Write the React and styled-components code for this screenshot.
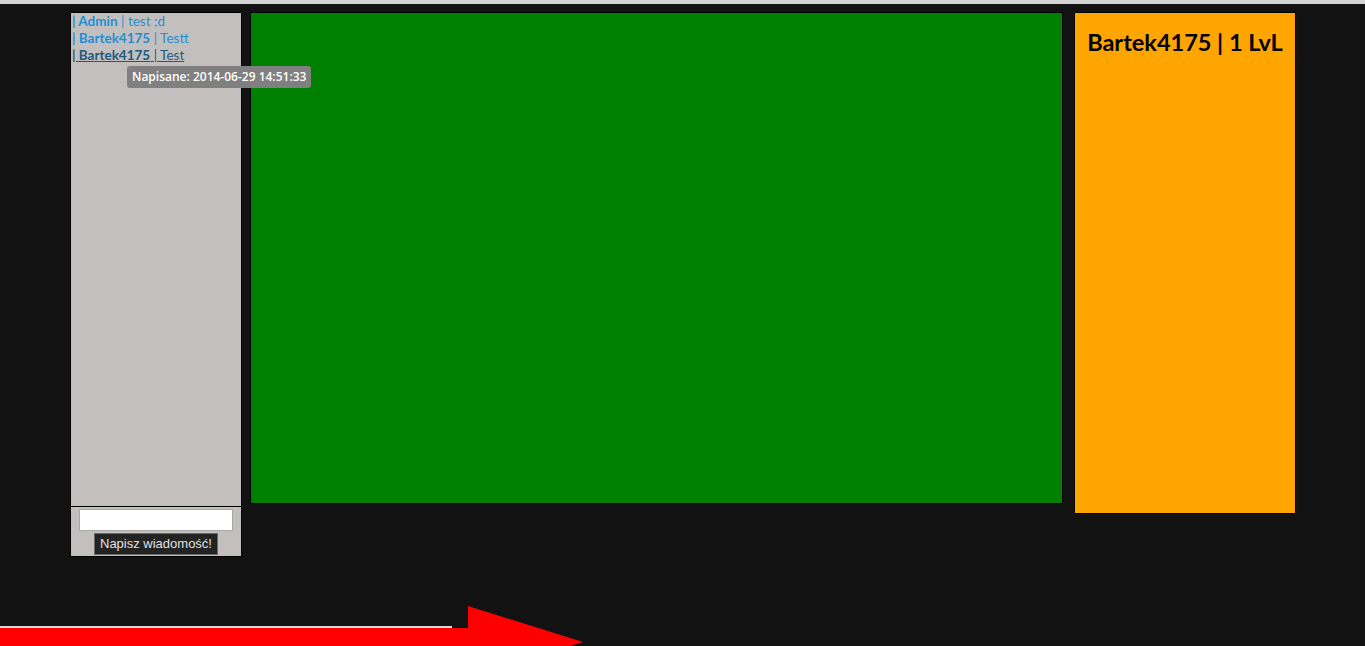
import React from "react";
import styled, { createGlobalStyle } from "styled-components";

const Global = createGlobalStyle`
  html, body {
    margin: 0;
    padding: 0;
    background: #121212;
    height: 100%;
    overflow: hidden;
  }
  #root {
    min-height: 100%;
  }
`;

const messages = [
  { user: "Admin", text: "test ;d" },
  { user: "Bartek4175", text: "Testt" },
  { user: "Bartek4175", text: "Test", hover: true },
];

export default function App() {
  return (
    <>
      <Global />
      <TopStrip />
      <Page>
        <Chat>
          <Messages>
            {messages.map((m, i) => (
              <Message key={i} $hover={m.hover}>
                <b>| {m.user}</b> | {m.text}
                {m.hover && <Tooltip>Napisane: 2014-06-29 14:51:33</Tooltip>}
              </Message>
            ))}
          </Messages>
          <Form>
            <Input type="text" />
            <Button>Napisz wiadomość!</Button>
          </Form>
        </Chat>
        <Game />
        <Profile>
          <h2>Bartek4175 | 1 LvL</h2>
        </Profile>
      </Page>
      <Arrow width="600" height="60" viewBox="0 586 600 60">
        <rect x="0" y="626" width="452" height="2" fill="#d8d8d8" />
        <polygon
          points="0,628 468,628 468,606 583,642 468,678 468,656 0,656"
          fill="#ff0000"
        />
      </Arrow>
    </>
  );
}

const TopStrip = styled.div`
  height: 4px;
  background: #d4d4d4;
`;

const Page = styled.div`
  display: flex;
  align-items: flex-start;
  padding: 8px 0 0 70px;
`;

const Chat = styled.div`
  box-sizing: border-box;
  width: 172px;
  height: 545px;
  border: 1px solid #000;
  background: #c4bfbf;
  display: flex;
  flex-direction: column;
`;

const Messages = styled.div`
  flex: 1;
  border-bottom: 1px solid #000;
`;

const Message = styled.div`
  position: relative;
  display: table;
  font-family: Lato, "Open Sans", sans-serif;
  font-size: 13.5px;
  line-height: 17px;
  padding-left: 1px;
  color: ${(p) => (p.$hover ? "#1c5a7e" : "#1e8fd4")};
  text-decoration: ${(p) => (p.$hover ? "underline" : "none")};
  b {
    font-weight: 700;
  }
`;

const Tooltip = styled.span`
  position: absolute;
  left: 56px;
  top: 19px;
  white-space: nowrap;
  background: #808080;
  color: #fff;
  font-family: "Open Sans", sans-serif;
  font-weight: 600;
  font-size: 12px;
  line-height: 22px;
  padding: 0 5px;
  border-radius: 3px;
  text-decoration: none;
  display: inline-block;
`;

const Form = styled.div`
  height: 49px;
  display: flex;
  flex-direction: column;
  align-items: center;
  justify-content: center;
  gap: 2px;
`;

const Input = styled.input`
  box-sizing: border-box;
  width: 154px;
  height: 22px;
  border: 1px solid #a8a8a8;
  background: #fff;
  margin: 0;
`;

const Button = styled.button`
  box-sizing: border-box;
  height: 22px;
  padding: 0 5px;
  background: #232323;
  color: #e0e0e0;
  border: 1px solid #6a6a6a;
  font-family: "Liberation Sans", Arial, sans-serif;
  font-size: 13px;
`;

const Game = styled.div`
  box-sizing: border-box;
  margin-left: 8px;
  width: 813px;
  height: 492px;
  background: #008000;
  border: 1px solid #000;
`;

const Profile = styled.div`
  box-sizing: border-box;
  margin-left: 11px;
  width: 222px;
  height: 502px;
  background: #ffa500;
  border: 1px solid #000;
  h2 {
    margin: 15px 0 0;
    text-align: center;
    font-family: Lato, "Open Sans", sans-serif;
    font-weight: 700;
    font-size: 23.5px;
    color: #000;
  }
`;

const Arrow = styled.svg`
  position: absolute;
  left: 0;
  top: 586px;
  pointer-events: none;
`;
